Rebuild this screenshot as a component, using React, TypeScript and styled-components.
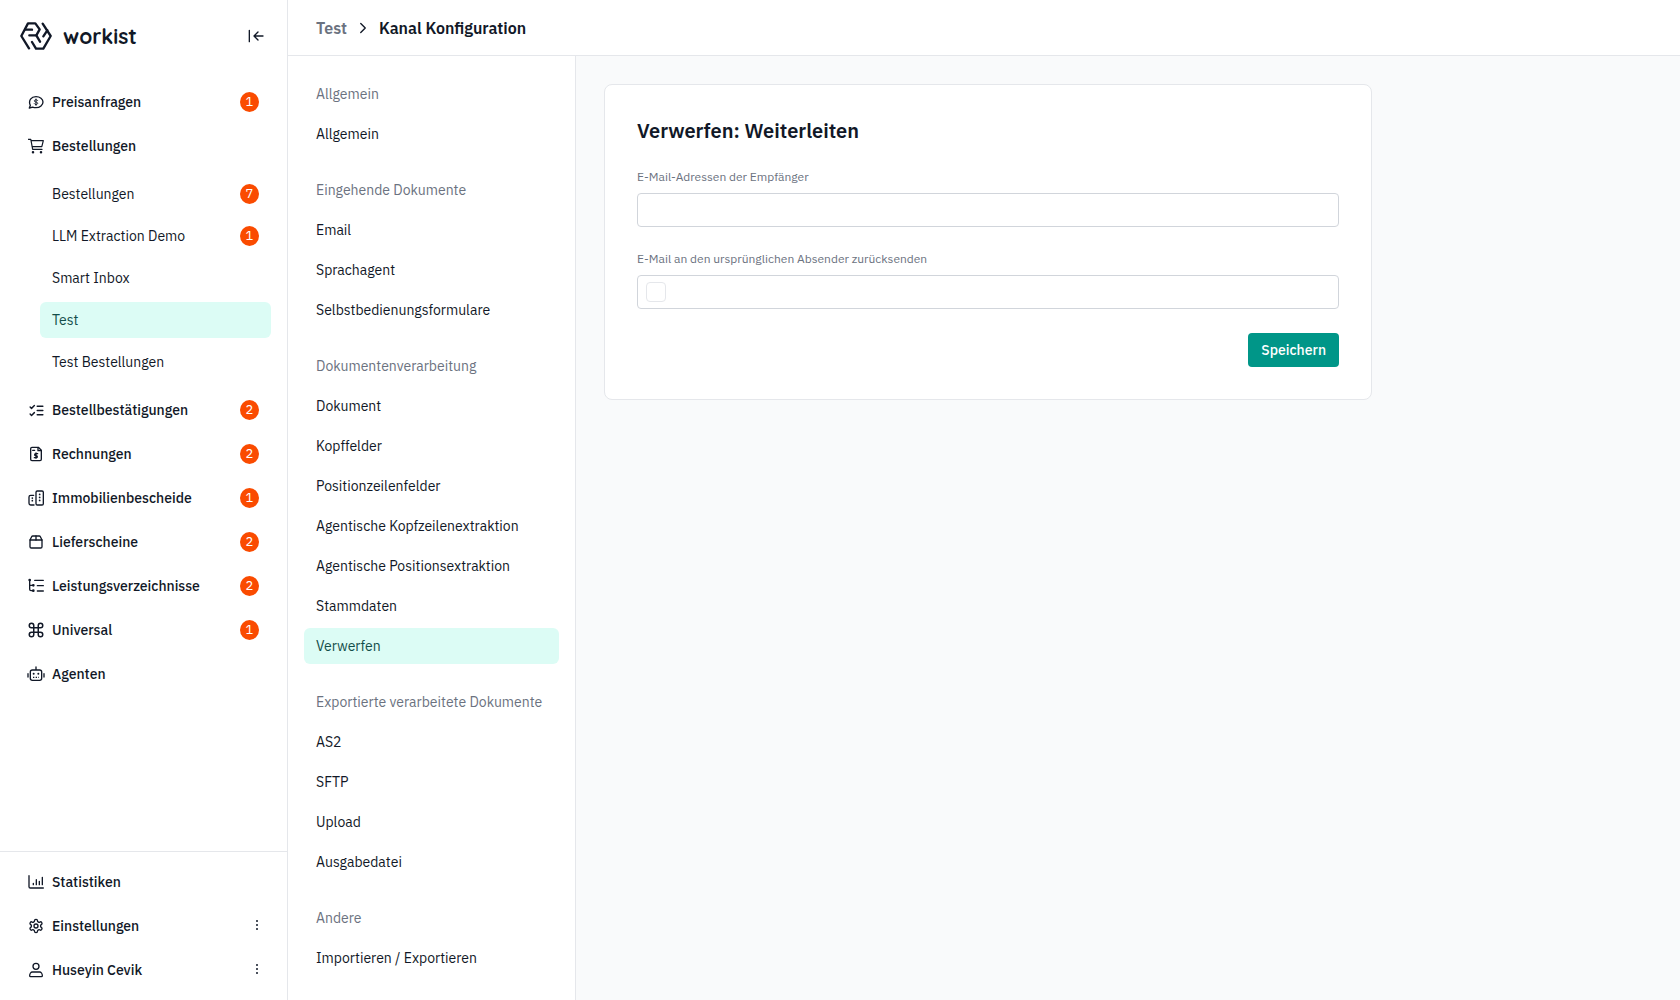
import React from "react";
import styled, { createGlobalStyle, css } from "styled-components";
import { LuChevronRight, LuCommand, LuListChecks, LuPackage2, LuSettings } from "react-icons/lu";

const GlobalStyle = createGlobalStyle`
  *, *::before, *::after { box-sizing: border-box; }
  body {
    margin: 0;
    font-family: "IBM Plex Sans", Roboto, "Noto Sans", sans-serif;
    font-size: 14px;
    line-height: 20px;
    color: #111827;
    background: #f9fafb;
  }
  ul { list-style: none; margin: 0; padding: 0; }
  h1, h2 { margin: 0; }
  a { color: inherit; text-decoration: none; }
  button { font: inherit; cursor: pointer; }
`;

const line = "#e5e7eb";

const Shell = styled.div`
  display: grid;
  grid-template-columns: 288px minmax(0, 1fr);
  min-height: 100vh;
`;

const Sidebar = styled.aside`
  display: flex;
  flex-direction: column;
  background: #fff;
  border-right: 1px solid ${line};
`;

const SidebarHead = styled.div`
  display: flex;
  align-items: center;
  justify-content: space-between;
  height: 72px;
  padding: 0 19px 0 20px;
`;

const Brand = styled.a`
  display: flex;
  align-items: center;
  gap: 11px;
`;

const BrandName = styled.span`
  font: 700 21px/28px Quicksand, Lato, sans-serif;
`;

const IconButton = styled.button`
  display: flex;
  padding: 4px;
  border: 0;
  background: none;
  color: inherit;
`;

const MenuButton = styled(IconButton)`
  padding: 4px 0;
`;

const Nav = styled.nav`
  padding: 12px 16px;
`;

const MainNav = styled(Nav)`
  flex: 1;
`;

const FooterNav = styled(Nav)`
  border-top: 1px solid ${line};
`;

const NavList = styled.ul`
  display: flex;
  flex-direction: column;
  gap: 8px;
`;

const SubList = styled.ul`
  display: flex;
  flex-direction: column;
  gap: 6px;
  padding: 12px 0 4px 24px;
`;

const active = css`
  background: #dcfcf5;
  color: #134e4a;
`;

const RowBase = styled.div<{ $active?: boolean }>`
  display: flex;
  align-items: center;
  height: 36px;
  padding: 0 12px;
  border-radius: 6px;
  ${p => p.$active && active}
`;

const NavRow = styled(RowBase)`
  gap: 8px;
  font-weight: 500;
`;

const RowLink = styled.a`
  flex: 1;
`;

const Badge = styled.span`
  display: grid;
  place-items: center;
  width: 19px;
  height: 20px;
  border-radius: 50%;
  background: #fa4b00;
  color: #fff;
  font-size: 13px;
  font-weight: 400;
`;

const Page = styled.div`
  display: flex;
  flex-direction: column;
`;

const TopBar = styled.header`
  display: flex;
  align-items: center;
  gap: 7px;
  height: 56px;
  padding: 0 28px;
  background: #fff;
  border-bottom: 1px solid ${line};
  font-size: 16px;
  font-weight: 600;
  a { color: #6b7280; }
  h1 { font-size: 16px; font-weight: 600; }
`;

const Body = styled.div`
  flex: 1;
  display: grid;
  grid-template-columns: 288px minmax(0, 1fr);
`;

const ConfigNav = styled.nav`
  display: flex;
  flex-direction: column;
  gap: 20px;
  padding: 20px 16px;
  background: #fff;
  border-right: 1px solid ${line};
`;

const ConfigList = styled.ul`
  display: flex;
  flex-direction: column;
  gap: 4px;
`;

const GroupLabel = styled(RowBase)`
  color: #6b7280;
  white-space: nowrap;
`;

const Content = styled.main`
  padding: 28px;
`;

const Card = styled.form`
  display: flex;
  flex-direction: column;
  gap: 24px;
  max-width: 768px;
  padding: 32px;
  background: #fff;
  border: 1px solid ${line};
  border-radius: 8px;
  h2 { font-size: 20px; line-height: 28px; font-weight: 600; }
`;

const Field = styled.div`
  display: flex;
  flex-direction: column;
  gap: 8px;
  label { font-size: 12px; line-height: 16px; color: #6b7280; }
`;

const inputBox = css`
  height: 34px;
  border: 1px solid #d1d5db;
  border-radius: 4px;
  background: #fff;
`;

const TextInput = styled.input`
  ${inputBox}
  width: 100%;
  padding: 0 8px;
  font: inherit;
`;

const CheckBoxFrame = styled.div`
  ${inputBox}
  display: flex;
  align-items: center;
  padding: 0 8px;
`;

const CheckBox = styled.input`
  appearance: none;
  width: 20px;
  height: 20px;
  margin: 0;
  border: 1px solid ${line};
  border-radius: 4px;
  background: #fff;
  &:checked { background: #009688; }
`;

const SaveButton = styled.button`
  align-self: flex-end;
  height: 34px;
  padding: 0 13px;
  border: 0;
  border-radius: 4px;
  background: #009688;
  color: #fff;
  font-weight: 500;
`;

const Stroke = ({ children, size = 16, width = 2 }: { children: React.ReactNode; size?: number; width?: number }) => (
  <svg width={size} height={size} viewBox="0 0 24 24" fill="none" stroke="currentColor" strokeWidth={width} strokeLinecap="round" strokeLinejoin="round" aria-hidden="true">
    {children}
  </svg>
);

const LogoMark = () => (
  <svg width="32" height="28" viewBox="60 66 96 84" fill="none" stroke="currentColor" strokeWidth="7" strokeLinejoin="round" strokeLinecap="round" aria-hidden="true">
    <path d="M87 145 64 108 84 70h22l13 18-10 18 11 19" />
    <path d="M77 89h19M88 106h21" />
    <path d="m128 71 24 37-22 38h-22l-12-20" />
    <path d="m142 91-12 18" />
  </svg>
);

const CollapseIcon = () => (
  <Stroke><path d="M2 3.500v17M22.500 12H9M15 6l-6 6 6 6" /></Stroke>
);
const ChatDollarIcon = () => (
  <Stroke>
    <path d="M3.500 17C0 9.500 5 4 12 4c6 0 10.500 3.500 10.500 8S18 20.500 12 20.500c-2 0-3.500-.3-5-.9L2 21z" />
    <path d="M14.500 9.800c-.5-.8-1.400-1.100-2.500-1.100-3.300 0-3.300 3.200 0 3.400 3.300.3 3.300 3.600 0 3.600-1.200 0-2.100-.4-2.600-1.200M12 7.500v9.500" strokeWidth="1.500" />
  </Stroke>
);
const CartIcon = () => (
  <Stroke width={1.8}>
    <path d="M.5 2h3.700l2.800 15.200h14M4.500 4h18.500l-2.300 8.800H6" />
    <circle cx="7.500" cy="21.500" r="1" fill="currentColor" />
    <circle cx="19.500" cy="21.500" r="1" fill="currentColor" />
  </Stroke>
);
const InvoiceIcon = () => (
  <Stroke>
    <path d="M6 2h9.500L20 6.500V20a2 2 0 0 1-2 2H6a2 2 0 0 1-2-2V4a2 2 0 0 1 2-2z" />
    <path d="M15 2.500V7h4.500M7 6.500h3" />
    <path d="M14.500 11.500h-3a1.500 1.500 0 0 0 0 3h1a1.500 1.500 0 0 1 0 3h-3M12 10.500v8" />
  </Stroke>
);
const BuildingsIcon = () => (
  <Stroke>
    <rect x="12" y="1.500" width="11" height="21" rx="2" />
    <path d="M8.500 8H4a2.500 2.500 0 0 0-2.500 2.500V20A2.500 2.500 0 0 0 4 22.500h5" />
    <path d="M17.500 6.500v.1M17.500 11v.1M17.500 15.500v.1M6.500 12v.1M6.500 16v.1" strokeWidth="2.600" />
  </Stroke>
);
const TreeIcon = () => (
  <Stroke>
    <path d="M2.500 3v14a2 2 0 0 0 2 2H8M2.500 11H8M10 3.500h13M14 11.500h9M14 19.500h9" />
    <circle cx="2.500" cy="3" r="1" fill="currentColor" />
    <circle cx="8" cy="11" r="1" fill="currentColor" />
    <circle cx="8" cy="19" r="1" fill="currentColor" />
  </Stroke>
);
const RobotIcon = () => (
  <svg width="18" height="16" viewBox="0 0 27 24" fill="none" stroke="currentColor" strokeWidth="2" strokeLinecap="round" strokeLinejoin="round" aria-hidden="true">
    <path d="M13.500 1.500V6M8 6h11a3 3 0 0 1 3 3v9.500a3 3 0 0 1-3 3H8a3 3 0 0 1-3-3V9a3 3 0 0 1 3-3zM1.500 11.500v5M25.500 11.500v5" />
    <path d="M10 11.500v.2M17 11.500v.2" strokeWidth="3" />
    <path d="M9 17h9" strokeDasharray="2 2" strokeLinecap="butt" />
  </svg>
);
const StatsIcon = () => (
  <Stroke>
    <path d="M1.500 2.500V19a2 2 0 0 0 2 2h19.500M8 14v2M12.500 8.500V16M17 11v5M21.500 5v11" />
  </Stroke>
);
const UserIcon = () => (
  <Stroke>
    <circle cx="12" cy="6.500" r="4.500" />
    <path d="M6.500 15h11c2 0 4 2.500 4 5.500 0 1-.5 1.500-1.500 1.500H4c-1 0-1.500-.5-1.500-1.500 0-3 2-5.500 4-5.500z" />
  </Stroke>
);
const DotsIcon = () => (
  <svg width="4" height="16" viewBox="0 0 4 16" fill="currentColor" aria-hidden="true">
    <circle cx="2" cy="3" r="1" /><circle cx="2" cy="7" r="1" /><circle cx="2" cy="11" r="1" />
  </svg>
);

type Item = { label: string; icon?: React.ReactNode; count?: number; menu?: boolean; active?: boolean; children?: Item[] };

const mainItems: Item[] = [
  { label: "Preisanfragen", icon: <ChatDollarIcon />, count: 1 },
  {
    label: "Bestellungen",
    icon: <CartIcon />,
    children: [
      { label: "Bestellungen", count: 7 },
      { label: "LLM Extraction Demo", count: 1 },
      { label: "Smart Inbox" },
      { label: "Test", active: true },
      { label: "Test Bestellungen" },
    ],
  },
  { label: "Bestellbestätigungen", icon: <LuListChecks size={17} />, count: 2 },
  { label: "Rechnungen", icon: <InvoiceIcon />, count: 2 },
  { label: "Immobilienbescheide", icon: <BuildingsIcon />, count: 1 },
  { label: "Lieferscheine", icon: <LuPackage2 size={16} />, count: 2 },
  { label: "Leistungsverzeichnisse", icon: <TreeIcon />, count: 2 },
  { label: "Universal", icon: <LuCommand size={18} />, count: 1 },
  { label: "Agenten", icon: <RobotIcon /> },
];

const footerItems: Item[] = [
  { label: "Statistiken", icon: <StatsIcon /> },
  { label: "Einstellungen", icon: <LuSettings size={16} />, menu: true },
  { label: "Huseyin Cevik", icon: <UserIcon />, menu: true },
];

const configGroups = [
  { label: "Allgemein", items: ["Allgemein"] },
  { label: "Eingehende Dokumente", items: ["Email", "Sprachagent", "Selbstbedienungsformulare"] },
  {
    label: "Dokumentenverarbeitung",
    items: ["Dokument", "Kopffelder", "Positionzeilenfelder", "Agentische Kopfzeilenextraktion", "Agentische Positionsextraktion", "Stammdaten", "Verwerfen"],
  },
  { label: "Exportierte verarbeitete Dokumente", items: ["AS2", "SFTP", "Upload", "Ausgabedatei"] },
  { label: "Andere", items: ["Importieren / Exportieren"] },
];

const IconSlot = styled.span`
  display: flex;
  justify-content: center;
  width: 16px;
  > svg { flex: none; }
`;

const NavItem = ({ item }: { item: Item }) => (
  <li>
    <NavRow $active={item.active}>
      <IconSlot>{item.icon}</IconSlot>
      <RowLink href="#">{item.label}</RowLink>
      {item.count && <Badge>{item.count}</Badge>}
      {item.menu && <MenuButton type="button" aria-label={`${item.label} Menü`}><DotsIcon /></MenuButton>}
    </NavRow>
    {item.children && (
      <SubList>
        {item.children.map(child => (
          <li key={child.label}>
            <RowBase $active={child.active}>
              <RowLink href="#">{child.label}</RowLink>
              {child.count && <Badge>{child.count}</Badge>}
            </RowBase>
          </li>
        ))}
      </SubList>
    )}
  </li>
);

export default function App() {
  return (
    <>
      <GlobalStyle />
      <Shell>
        <Sidebar>
          <SidebarHead>
            <Brand href="#"><LogoMark /><BrandName>workist</BrandName></Brand>
            <IconButton type="button" aria-label="Seitenleiste einklappen"><CollapseIcon /></IconButton>
          </SidebarHead>
          <MainNav>
            <NavList>{mainItems.map(i => <NavItem key={i.label} item={i} />)}</NavList>
          </MainNav>
          <FooterNav>
            <NavList>{footerItems.map(i => <NavItem key={i.label} item={i} />)}</NavList>
          </FooterNav>
        </Sidebar>
        <Page>
          <TopBar>
            <a href="#">Test</a>
            <LuChevronRight size={18} strokeWidth={1.8} />
            <h1>Kanal Konfiguration</h1>
          </TopBar>
          <Body>
            <ConfigNav>
              {configGroups.map(group => (
                <ConfigList key={group.label}>
                  <li><GroupLabel>{group.label}</GroupLabel></li>
                  {group.items.map(label => (
                    <li key={label}>
                      <RowBase $active={label === "Verwerfen"}><RowLink href="#">{label}</RowLink></RowBase>
                    </li>
                  ))}
                </ConfigList>
              ))}
            </ConfigNav>
            <Content>
              <Card>
                <h2>Verwerfen: Weiterleiten</h2>
                <Field>
                  <label htmlFor="recipients">E-Mail-Adressen der Empfänger</label>
                  <TextInput id="recipients" type="text" />
                </Field>
                <Field>
                  <label htmlFor="send-back">E-Mail an den ursprünglichen Absender zurücksenden</label>
                  <CheckBoxFrame><CheckBox id="send-back" type="checkbox" /></CheckBoxFrame>
                </Field>
                <SaveButton type="button">Speichern</SaveButton>
              </Card>
            </Content>
          </Body>
        </Page>
      </Shell>
    </>
  );
}
